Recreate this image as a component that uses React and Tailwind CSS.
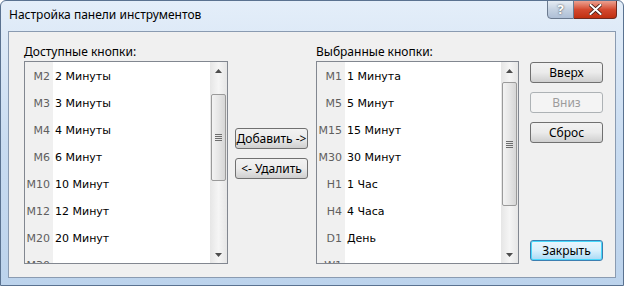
const LEFT_ITEMS = [
  ['M2', '2 Минуты'],
  ['M3', '3 Минуты'],
  ['M4', '4 Минуты'],
  ['M6', '6 Минут'],
  ['M10', '10 Минут'],
  ['M12', '12 Минут'],
  ['M20', '20 Минут'],
  ['M30', ''],
]

const RIGHT_ITEMS = [
  ['M1', '1 Минута'],
  ['M5', '5 Минут'],
  ['M15', '15 Минут'],
  ['M30', '30 Минут'],
  ['H1', '1 Час'],
  ['H4', '4 Часа'],
  ['D1', 'День'],
  ['W1', ''],
]

const uiFont = { fontFamily: '"Segoe UI", "Noto Sans", "Open Sans", sans-serif' }
const listFont = { fontFamily: 'Tahoma, "DejaVu Sans", sans-serif' }

function Scrollbar({ thumbTop, thumbHeight }) {
  return (
    <div className="w-[17px] h-full flex flex-col bg-gradient-to-r from-[#e6e6e6] via-[#f5f5f5] to-[#e6e6e6]">
      <div className="h-[17px] flex items-center justify-center">
        <svg width="7" height="4" viewBox="0 0 7 4"><path d="M0 4 L3.5 0 L7 4 Z" fill="#4d4d4d" /></svg>
      </div>
      <div className="flex-1 relative">
        <div
          className="absolute left-[1px] right-[1px] rounded-[2px] border border-[#9a9a9a] bg-gradient-to-r from-[#f3f3f3] via-[#e6e6e6] to-[#d6d6d6] flex items-center justify-center"
          style={{ top: thumbTop, height: thumbHeight }}
        >
          <div className="flex flex-col gap-[1px]">
            <div className="w-[7px] h-[1px] bg-[#6d6d6d]" />
            <div className="w-[7px] h-[1px] bg-[#6d6d6d]" />
            <div className="w-[7px] h-[1px] bg-[#6d6d6d]" />
            <div className="w-[7px] h-[1px] bg-[#6d6d6d]" />
          </div>
        </div>
      </div>
      <div className="h-[17px] flex items-center justify-center">
        <svg width="7" height="4" viewBox="0 0 7 4"><path d="M0 0 L3.5 4 L7 0 Z" fill="#4d4d4d" /></svg>
      </div>
    </div>
  )
}

function ListBox({ items, thumbTop, thumbHeight }) {
  return (
    <div className="h-[203px] border border-[#828790] bg-white flex overflow-hidden">
      <div className="flex-1 relative overflow-hidden">
        <div className="absolute left-0 top-0 bottom-0 w-[28px] bg-[#f0f0f0]" />
        <div className="relative pt-[2px]">
          {items.map(([code, label]) => (
            <div key={code + label} className="h-[27px] flex items-center">
              <span className="w-[25px] text-right text-[11px] text-[#5f5f5f]" style={listFont}>
                {code}
              </span>
              <span className="pl-[5px] text-[11px] text-black" style={listFont}>
                {label}
              </span>
            </div>
          ))}
        </div>
      </div>
      <Scrollbar thumbTop={thumbTop} thumbHeight={thumbHeight} />
    </div>
  )
}

function Btn({ children, disabled, primary }) {
  let cls = 'border-[#707070] bg-gradient-to-b from-[#f2f2f2] via-[#ebebeb] to-[#cfcfcf] text-black'
  if (disabled) cls = 'border-[#adb2b5] bg-[#f4f4f4] text-[#9c9c9c]'
  if (primary) cls = 'border-[#3c7fb1] bg-gradient-to-b from-[#eaf6fd] via-[#d9f0fc] to-[#a7d9f5] text-black shadow-[inset_0_0_0_1px_#48d8fb]'
  return (
    <div className={`h-[21px] w-[73px] rounded-[3px] border flex items-center justify-center text-[12px] ${cls}`} style={uiFont}>
      {children}
    </div>
  )
}

export default function App() {
  return (
    <div className="w-[624px] h-[286px] flex flex-col bg-gradient-to-b from-[#e4eef9] via-[#c9dcf1] to-[#bcd3ec] border border-[#5a7290] rounded-t-[6px] overflow-hidden" style={uiFont}>
      {/* Title bar */}
      <div className="h-[30px] flex items-start justify-between pl-[8px] pr-[6px]">
        <span className="mt-[5px] text-[12px] text-black">Настройка панели инструментов</span>
        <div className="flex h-[19px] -mt-[1px]">
          <div className="w-[27px] h-full border border-[#6b7a8f] rounded-bl-[4px] bg-gradient-to-b from-[#e6ecf3] via-[#c5d2e2] to-[#aebfd6] flex items-center justify-center">
            <span className="text-[13px] font-bold text-white leading-none" style={{ textShadow: '0 0 2px #333' }}>?</span>
          </div>
          <div className="w-[43px] h-full border border-[#6e2a20] border-l-0 rounded-br-[4px] bg-gradient-to-b from-[#eba090] via-[#d4492f] to-[#c0300f] flex items-center justify-center">
            <svg width="13" height="11" viewBox="0 0 13 11">
              <path d="M1.5 1 L11.5 10 M11.5 1 L1.5 10" stroke="#3b1a14" strokeWidth="3.6" strokeLinecap="square" />
              <path d="M1.5 1 L11.5 10 M11.5 1 L1.5 10" stroke="#fff" strokeWidth="2" strokeLinecap="square" />
            </svg>
          </div>
        </div>
      </div>

      {/* Client area */}
      <div className="flex-1 mx-[7px] mb-[7px] border border-[#8a9bb1] bg-[#f0f0f0] flex pt-[12px] pl-[15px]">
        <div className="w-[204px] flex flex-col">
          <span className="h-[15px] text-[12px] leading-[15px] text-black">Доступные кнопки:</span>
          <div className="mt-[2px]">
            <ListBox items={LEFT_ITEMS} thumbTop={15} thumbHeight={87} />
          </div>
        </div>

        <div className="ml-[7px] pt-[84px] flex flex-col gap-[9px]">
          <Btn>Добавить -&gt;</Btn>
          <Btn>&lt;- Удалить</Btn>
        </div>

        <div className="ml-[8px] w-[203px] flex flex-col">
          <span className="h-[15px] text-[12px] leading-[15px] text-black">Выбранные кнопки:</span>
          <div className="mt-[2px]">
            <ListBox items={RIGHT_ITEMS} thumbTop={3} thumbHeight={124} />
          </div>
        </div>

        <div className="ml-[11px] pt-[18px] pb-[16px] flex flex-col">
          <div className="flex flex-col gap-[9px]">
            <Btn>Вверх</Btn>
            <Btn disabled>Вниз</Btn>
            <Btn>Сброс</Btn>
          </div>
          <div className="mt-auto">
            <Btn primary>Закрыть</Btn>
          </div>
        </div>
      </div>
    </div>
  )
}
